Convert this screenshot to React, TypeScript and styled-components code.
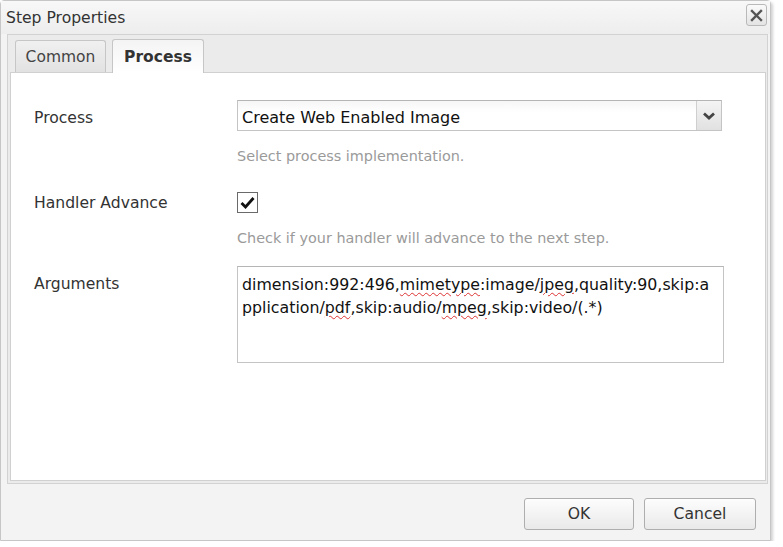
import React from 'react';
import styled, { createGlobalStyle } from 'styled-components';

// ═══════════════════════════════════════════════════════════════════════════
// GLOBAL
// ═══════════════════════════════════════════════════════════════════════════

const GlobalStyle = createGlobalStyle`
  html, body {
    margin: 0;
    padding: 0;
    background: #ffffff;
  }
  body {
    font-family: "DejaVu Sans", Verdana, sans-serif;
    color: #333;
  }
`;

// ═══════════════════════════════════════════════════════════════════════════
// STYLED COMPONENTS
// ═══════════════════════════════════════════════════════════════════════════

const Dialog = styled.div`
  display: flex;
  flex-direction: column;
  width: 769px;
  height: 539px;
  border: 1px solid #c6c6c6;
  border-radius: 4px 4px 0 0;
  background: #f3f3f3;
  box-shadow: 2px 2px 3px rgba(0, 0, 0, 0.18);
`;

const TitleBar = styled.div`
  display: flex;
  justify-content: space-between;
  height: 33px;
  padding: 0 3px 0 5px;
  background: linear-gradient(#f8f8f8, #ededed);
`;

const Title = styled.span`
  align-self: center;
  margin-top: 1px;
  font-size: 15.6px;
  color: #333;
`;

const CloseButton = styled.button`
  display: flex;
  align-items: center;
  justify-content: center;
  width: 21px;
  height: 22px;
  margin-top: 3px;
  padding: 0;
  border: 1px solid #b9b9b9;
  border-radius: 3px;
  background: linear-gradient(#fafafa, #e4e4e4);
  cursor: pointer;
`;

const Frame = styled.div`
  display: flex;
  flex-direction: column;
  height: 446px;
  margin: 0 2px 0 6px;
  padding: 0 1px 2px 2px;
  border: 1px solid #d2d2d2;
  background: #ebebeb;
`;

const TabStrip = styled.div`
  display: flex;
  align-items: flex-end;
  gap: 6px;
  height: 37px;
  padding-left: 5px;
`;

const Tab = styled.div<{ $active?: boolean }>`
  display: flex;
  align-items: center;
  justify-content: center;
  box-sizing: border-box;
  width: ${({ $active }) => ($active ? '92px' : '91px')};
  height: ${({ $active }) => ($active ? '34px' : '32px')};
  margin-bottom: ${({ $active }) => ($active ? '-1px' : '0')};
  padding-bottom: ${({ $active }) => ($active ? '0' : '0')};
  border: 1px solid #c6c6c6;
  border-bottom: none;
  border-radius: 3px 3px 0 0;
  background: ${({ $active }) =>
    $active ? 'linear-gradient(#f4f4f4, #ffffff)' : 'linear-gradient(#f0f0f0, #e2e2e2)'};
  font-size: 15.5px;
  font-weight: ${({ $active }) => ($active ? 'bold' : 'normal')};
  color: ${({ $active }) => ($active ? '#333' : '#444')};
  position: relative;
  z-index: ${({ $active }) => ($active ? 1 : 0)};
`;

const Panel = styled.div`
  flex: 1;
  padding: 27px 0 0 23px;
  border: 1px solid #d0d0d0;
  background: #ffffff;
`;

const Row = styled.div<{ $space: number }>`
  display: flex;
  margin-bottom: ${({ $space }) => $space}px;
`;

const Label = styled.div<{ $offset: number }>`
  width: 203px;
  flex-shrink: 0;
  padding-top: ${({ $offset }) => $offset}px;
  font-size: 15.6px;
  line-height: 20px;
  color: #333;
`;

const Field = styled.div`
  display: flex;
  flex-direction: column;
`;

const Select = styled.div`
  display: flex;
  box-sizing: border-box;
  width: 485px;
  height: 31px;
  border: 1px solid #c4c4c4;
  border-top-color: #b5b5b5;
  background: linear-gradient(#f6f6f6, #ffffff 40%);
`;

const SelectValue = styled.div`
  flex: 1;
  display: flex;
  align-items: center;
  padding: 3px 0 0 4px;
  font-size: 16px;
  color: #111;
`;

const SelectArrow = styled.div`
  display: flex;
  align-items: center;
  justify-content: center;
  width: 24px;
  border-left: 1px solid #cfcfcf;
  background: linear-gradient(#f4f4f4, #e1e1e1);
`;

const HelpText = styled.div<{ $gap: number }>`
  margin-top: ${({ $gap }) => $gap}px;
  font-size: 14.4px;
  line-height: 20px;
  color: #9a9a9a;
`;

const CheckBox = styled.div`
  display: flex;
  align-items: center;
  justify-content: center;
  box-sizing: border-box;
  width: 21px;
  height: 21px;
  border: 1px solid #6a6a6a;
  background: #ffffff;
`;

const TextArea = styled.div`
  box-sizing: border-box;
  width: 487px;
  height: 97px;
  padding: 6px 4px 5px;
  border: 1px solid #c4c4c4;
  border-top-color: #b5b5b5;
  background: #ffffff;
  font-size: 15.8px;
  line-height: 23px;
  color: #111;
  white-space: nowrap;
`;

const Misspelled = styled.span`
  text-decoration: underline wavy #d33;
  text-decoration-thickness: 1px;
  text-underline-offset: 2px;
`;

const Footer = styled.div`
  flex: 1;
  display: flex;
  justify-content: flex-end;
  align-items: flex-start;
  gap: 10px;
  padding: 14px 14px 0 0;
`;

const Button = styled.button<{ $width: number }>`
  box-sizing: border-box;
  width: ${({ $width }) => $width}px;
  height: 32px;
  border: 1px solid #aeaeae;
  border-radius: 3px;
  background: linear-gradient(#fdfdfd, #e9e9e9);
  font-family: "DejaVu Sans", Verdana, sans-serif;
  font-size: 15.6px;
  color: #333;
  cursor: pointer;
`;

// ═══════════════════════════════════════════════════════════════════════════
// COMPONENT
// ═══════════════════════════════════════════════════════════════════════════

const App: React.FC = () => {
  return (
    <>
      <GlobalStyle />
      <Dialog>
        <TitleBar>
          <Title>Step Properties</Title>
          <CloseButton aria-label="Close">
            <svg width="13" height="13" viewBox="0 0 13 13">
              <path d="M2 2 L11 11 M11 2 L2 11" stroke="#555" strokeWidth="2.4" strokeLinecap="square" />
            </svg>
          </CloseButton>
        </TitleBar>

        <Frame>
          <TabStrip>
            <Tab>Common</Tab>
            <Tab $active>Process</Tab>
          </TabStrip>

          <Panel>
            <Row $space={26}>
              <Label $offset={8}>Process</Label>
              <Field>
                <Select>
                  <SelectValue>Create Web Enabled Image</SelectValue>
                  <SelectArrow>
                    <svg width="14" height="10" viewBox="0 0 14 10">
                      <path d="M2 2.5 L7 7 L12 2.5" fill="none" stroke="#444" strokeWidth="2.8" />
                    </svg>
                  </SelectArrow>
                </Select>
                <HelpText $gap={15}>Select process implementation.</HelpText>
              </Field>
            </Row>

            <Row $space={18}>
              <Label $offset={1}>Handler Advance</Label>
              <Field>
                <CheckBox>
                  <svg width="15" height="13" viewBox="0 0 15 13">
                    <path d="M1.5 7 L5.5 11 L13.5 2" fill="none" stroke="#111" strokeWidth="2.8" />
                  </svg>
                </CheckBox>
                <HelpText $gap={15}>Check if your handler will advance to the next step.</HelpText>
              </Field>
            </Row>

            <Row $space={0}>
              <Label $offset={8}>Arguments</Label>
              <TextArea>
                dimension:992:496,<Misspelled>mimetype</Misspelled>:image/<Misspelled>jpeg</Misspelled>,quality:90,skip:a
                <br />
                pplication/<Misspelled>pdf</Misspelled>,skip:audio/<Misspelled>mpeg</Misspelled>,skip:video/(.*)
              </TextArea>
            </Row>
          </Panel>
        </Frame>

        <Footer>
          <Button $width={110}>OK</Button>
          <Button $width={112}>Cancel</Button>
        </Footer>
      </Dialog>
    </>
  );
};

export default App;
